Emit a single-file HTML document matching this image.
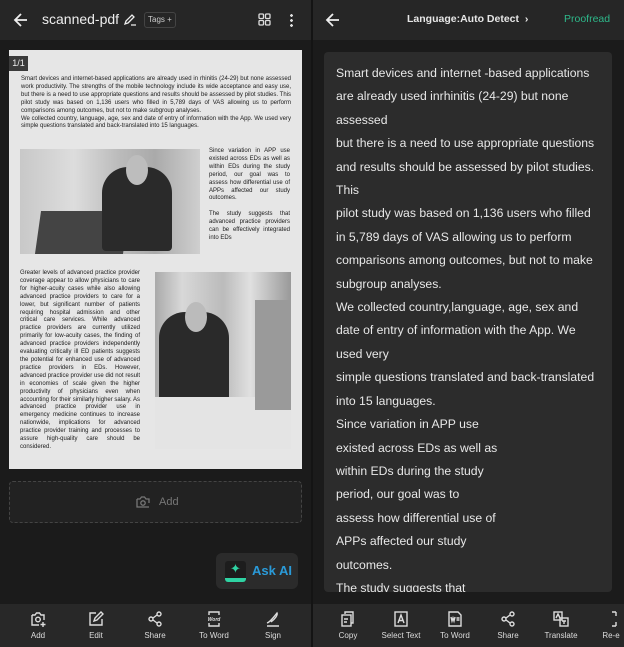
<!DOCTYPE html>
<html><head><meta charset="utf-8"><style>
*{margin:0;padding:0;box-sizing:border-box}
body{width:624px;height:647px;background:#1b1b1b;font-family:"Liberation Sans",sans-serif;position:relative;overflow:hidden;color:#eee}
.abs{position:absolute}
.hdr{top:0;height:40px;background:#262626}
.doc{left:9px;top:50px;width:293px;height:419px;background:#e6e6e6;color:#1a1a1a;font-size:6px;line-height:7.9px}
.doc p{text-align:justify}
.bar{top:604px;height:43px;background:#282828}
.it{position:absolute;top:6px;width:60px;text-align:center;font-size:8px;color:#ddd}
.it svg{display:block;margin:0 auto 3px;width:18px;height:18px}
.card{left:324px;top:52px;width:288px;height:540px;background:#2c2c2c;border-radius:4px;overflow:hidden}
.card div{font-size:12.2px;line-height:23.4px;color:#e8e8e8;padding:10px 0 0 12px;white-space:pre}
</style></head><body>
<div class="abs hdr" style="left:0;width:311px"></div>
<div class="abs hdr" style="left:313px;width:311px"></div>
<div class="abs" style="left:311px;top:0;width:2px;height:647px;background:#141414"></div>
<svg class="abs" style="left:13px;top:12px" width="16" height="16" viewBox="0 0 16 16"><path d="M14 8H2M8 2L2 8l6 6" stroke="#eee" stroke-width="1.8" fill="none"/></svg>
<div class="abs" style="left:42px;top:11px;font-size:14px;color:#eee">scanned-pdf</div>
<svg class="abs" style="left:123px;top:13px" width="14" height="14" viewBox="0 0 14 14"><path d="M2 11l1-3 6-6 2 2-6 6zM8 12h5" stroke="#eee" stroke-width="1.3" fill="none"/></svg>
<div class="abs" style="left:144px;top:12px;height:16px;padding:0 3px;border:1px solid #444;border-radius:3px;font-size:8px;line-height:14px;color:#ccc">Tags +</div>
<svg class="abs" style="left:258px;top:13px" width="13" height="13" viewBox="0 0 13 13" fill="none" stroke="#ddd" stroke-width="1.3"><rect x="1" y="1" width="4.5" height="4.5" rx="1"/><rect x="7.5" y="1" width="4.5" height="4.5" rx="1"/><rect x="1" y="7.5" width="4.5" height="4.5" rx="1"/><rect x="7.5" y="7.5" width="4.5" height="4.5" rx="1"/></svg>
<div class="abs" style="left:290px;top:13px;width:3px;height:14px;background:radial-gradient(circle,#ddd 1.3px,transparent 1.5px) 0 0/3px 5px"></div>
<svg class="abs" style="left:325px;top:12px" width="16" height="16" viewBox="0 0 16 16"><path d="M14 8H2M8 2L2 8l6 6" stroke="#eee" stroke-width="1.8" fill="none"/></svg>
<div class="abs" style="left:407px;top:13px;font-size:10.5px;font-weight:bold;color:#e6e6e6">Language:Auto Detect &nbsp;›</div>
<div class="abs" style="left:564px;top:13px;font-size:10.5px;color:#2eb88a">Proofread</div>

<div class="abs doc">
<div class="abs" style="left:0;top:6px;width:19px;height:15px;background:#3a3a3a;color:#eee;font-size:9px;line-height:15px;text-align:center">1/1</div>
<p class="abs" style="left:12px;top:26px;width:270px">Smart devices and internet-based applications are already used in rhinitis (24-29) but none assessed work productivity. The strengths of the mobile technology include its wide acceptance and easy use, but there is a need to use appropriate questions and results should be assessed by pilot studies. This pilot study was based on 1,136 users who filled in 5,789 days of VAS allowing us to perform comparisons among outcomes, but not to make subgroup analyses.<br>We collected country, language, age, sex and date of entry of information with the App. We used very simple questions translated and back-translated into 15 languages.</p>
<div class="abs" style="left:11px;top:99px;width:180px;height:105px;background:linear-gradient(90deg,#c8c8c8 0,#ddd 30%,#bbb 55%,#aaa 75%,#cfcfcf 100%)">
<div class="abs" style="left:18px;top:62px;width:88px;height:43px;background:#444;transform:skewX(-8deg)"></div>
<div class="abs" style="left:82px;top:18px;width:70px;height:84px;background:#2a2a2a;border-radius:26px 26px 4px 4px"></div>
<div class="abs" style="left:106px;top:6px;width:22px;height:30px;background:#bdbdbd;border-radius:50%"></div>
</div>
<p class="abs" style="left:200px;top:98px;width:81px">Since variation in APP use existed across EDs as well as within EDs during the study period, our goal was to assess how differential use of APPs affected our study outcomes.<br><br>The study suggests that advanced practice providers can be effectively integrated into EDs</p>
<p class="abs" style="left:11px;top:220px;width:120px">Greater levels of advanced practice provider coverage appear to allow physicians to care for higher-acuity cases while also allowing advanced practice providers to care for a lower, but significant number of patients requiring hospital admission and other critical care services. While advanced practice providers are currently utilized primarily for low-acuity cases, the finding of advanced practice providers independently evaluating critically ill ED patients suggests the potential for enhanced use of advanced practice providers in EDs. However, advanced practice provider use did not result in economies of scale given the higher productivity of physicians even when accounting for their similarly higher salary. As advanced practice provider use in emergency medicine continues to increase nationwide, implications for advanced practice provider training and processes to assure high-quality care should be considered.</p>
<div class="abs" style="left:146px;top:222px;width:136px;height:177px;background:linear-gradient(90deg,#aaa 0,#d8d8d8 20%,#bbb 50%,#e0e0e0 70%,#999 100%)">
<div class="abs" style="left:4px;top:40px;width:70px;height:95px;background:#2a2a2a;border-radius:26px 26px 4px 4px"></div>
<div class="abs" style="left:30px;top:30px;width:22px;height:30px;background:#bbb;border-radius:50%"></div>
<div class="abs" style="left:0;top:125px;width:136px;height:52px;background:#e4e4e4"></div>
<div class="abs" style="left:100px;top:28px;width:36px;height:110px;background:#9a9a9a"></div>
</div>
</div>

<div class="abs" style="left:9px;top:481px;width:293px;height:42px;border:1px dashed #444;border-radius:4px;background:#222"></div>
<svg class="abs" style="left:135px;top:494px" width="16" height="16" viewBox="0 0 16 16" fill="none" stroke="#777" stroke-width="1.3"><path d="M2 5h3l1.5-2h3L11 5h3v4M14 13H2V5"/><circle cx="8" cy="9" r="2.2"/></svg>
<div class="abs" style="left:159px;top:496px;font-size:11px;color:#777">Add</div>

<div class="abs" style="left:216px;top:553px;width:82px;height:36px;background:#2b2b2b;border-radius:6px"></div>
<div class="abs" style="left:225px;top:561px;width:21px;height:21px;background:#1d1d1d;border-radius:3px;border-bottom:4px solid #2fd3a3;color:#2fd3a3;font-size:13px;line-height:16px;text-align:center">✦</div>
<div class="abs" style="left:252px;top:563px;font-size:13px;font-weight:bold;color:#2a9ad8">Ask AI</div>

<div class="abs card"><div>Smart devices and internet -based applications
are already used inrhinitis (24-29) but none
assessed
but there is a need to use appropriate questions
and results should be assessed by pilot studies.
This
pilot study was based on 1,136 users who filled
in 5,789 days of VAS allowing us to perform
comparisons among outcomes, but not to make
subgroup analyses.
We collected country,language, age, sex and
date of entry of information with the App. We
used very
simple questions translated and back-translated
into 15 languages.
Since variation in APP use
existed across EDs as well as
within EDs during the study
period, our goal was to
assess how differential use of
APPs affected our study
outcomes.
The study suggests that</div></div>

<div class="abs bar" style="left:0;width:311px">
<div class="it" style="left:8px"><svg viewBox="0 0 18 18" fill="none" stroke="#ddd" stroke-width="1.4"><path d="M3 5h3l1.5-2h3L12 5h3v5M10 15H3V5"/><circle cx="9" cy="9.5" r="2.3"/><path d="M14 12v5M11.5 14.5h5"/></svg>Add</div>
<div class="it" style="left:66px"><svg viewBox="0 0 18 18" fill="none" stroke="#ddd" stroke-width="1.4"><path d="M9 3H3v12h12V9"/><path d="M7 11l1-3 6-6 2 2-6 6z"/></svg>Edit</div>
<div class="it" style="left:125px"><svg viewBox="0 0 18 18" fill="none" stroke="#ddd" stroke-width="1.4"><circle cx="13" cy="4" r="2"/><circle cx="5" cy="9" r="2"/><circle cx="13" cy="14" r="2"/><path d="M7 8l4-3M7 10l4 3"/></svg>Share</div>
<div class="it" style="left:184px"><svg viewBox="0 0 18 18" fill="none" stroke="#ddd" stroke-width="1.4"><path d="M4 5V2h10v3M4 13v3h10v-3"/><text x="9" y="11" font-size="5" fill="#ddd" stroke="none" text-anchor="middle" font-style="italic" font-weight="bold">Word</text></svg>To Word</div>
<div class="it" style="left:243px"><svg viewBox="0 0 18 18" fill="none" stroke="#ddd" stroke-width="1.4"><path d="M3 13c3-1 6-5 10-10 1 2-2 6-6 9M3 16h12"/></svg>Sign</div>
</div>
<div class="abs bar" style="left:313px;width:311px">
<div class="it" style="left:5px"><svg viewBox="0 0 18 18" fill="none" stroke="#ddd" stroke-width="1.4"><path d="M6 4V2h8v11h-2"/><rect x="3" y="5" width="9" height="11"/><path d="M5 9h4M5 12h3"/></svg>Copy</div>
<div class="it" style="left:58px"><svg viewBox="0 0 18 18" fill="none" stroke="#ddd" stroke-width="1.4"><rect x="3" y="2" width="12" height="14"/><path d="M6 13l3-8 3 8M7 10.5h4"/></svg>Select Text</div>
<div class="it" style="left:112px"><svg viewBox="0 0 18 18" fill="none" stroke="#ddd" stroke-width="1.4"><path d="M3 2h9l3 3v11H3z"/><path d="M5 7l1 4 1-3 1 3 1-4M10.5 8h3M10.5 10h3"/></svg>To Word</div>
<div class="it" style="left:165px"><svg viewBox="0 0 18 18" fill="none" stroke="#ddd" stroke-width="1.4"><circle cx="13" cy="4" r="2"/><circle cx="5" cy="9" r="2"/><circle cx="13" cy="14" r="2"/><path d="M7 8l4-3M7 10l4 3"/></svg>Share</div>
<div class="it" style="left:218px"><svg viewBox="0 0 18 18" fill="none" stroke="#ddd" stroke-width="1.4"><rect x="2" y="2" width="8" height="8"/><rect x="8" y="8" width="8" height="8"/><path d="M4 8l2-4 2 4M10 11h4M12 11v3"/></svg>Translate</div>
<div class="it" style="left:268px"><svg viewBox="0 0 18 18" fill="none" stroke="#ddd" stroke-width="1.4"><path d="M14 2h-4M14 2v4M14 16h-4M14 16v-4"/></svg>Re-e</div>
</div>
</body></html>
